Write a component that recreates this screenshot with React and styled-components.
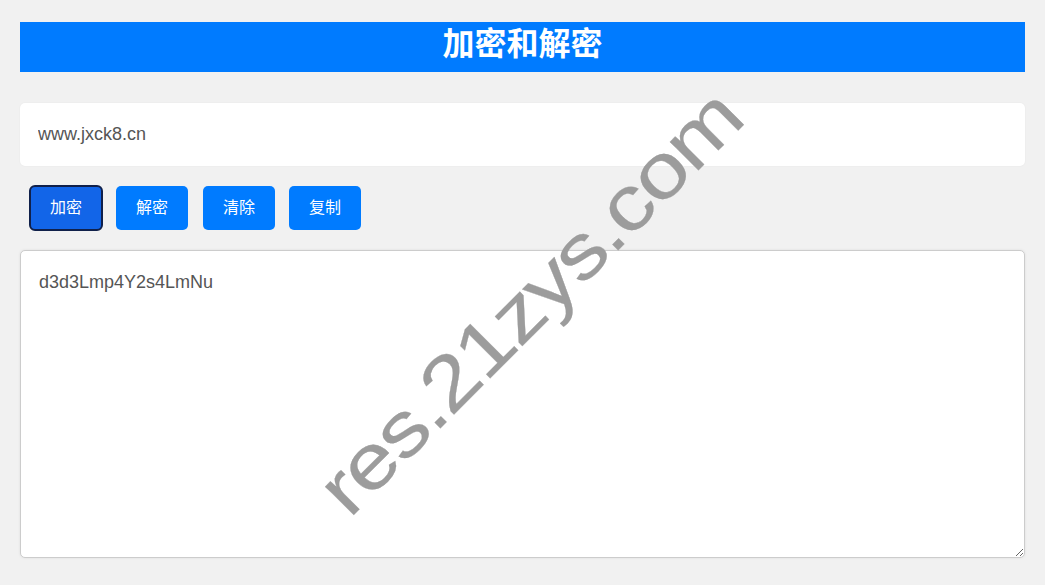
import React from "react";
import styled, { createGlobalStyle } from "styled-components";

const Global = createGlobalStyle`
  html, body { margin: 0; padding: 0; height: 100%; overflow: hidden; background: #f1f1f1; }
  * { box-sizing: border-box; }
`;
const FONT = `"Liberation Sans", Arial, "Noto Sans CJK SC", sans-serif`;

const Page = styled.div`
  position: relative;
  width: 1045px;
  height: 585px;
  padding: 22px 20px 0;
  background: #f1f1f1;
  font-family: ${FONT};
  overflow: hidden;
`;
const Title = styled.h1`
  margin: 0 0 31px;
  height: 50px;
  line-height: 45px;
  background: #007bff;
  color: #fff;
  text-align: center;
  font-size: 32px;
  font-weight: 700;
`;
const TextInput = styled.input`
  display: block;
  width: 100%;
  height: 63px;
  padding: 0 18px;
  border: 0;
  border-radius: 5px;
  background: #fff;
  box-shadow: 0 0 2px rgba(0, 0, 0, 0.06);
  color: #555;
  font: 18px ${FONT};
  outline: none;
`;
const Toolbar = styled.div`
  display: flex;
  gap: 15px;
  height: 44px;
  margin: 20px 0;
  padding-left: 10px;
`;
const Button = styled.button`
  width: 72px;
  height: 44px;
  padding: 0 0 5px;
  margin-right: ${(p) => p.$trim || 0}px;
  border: 0;
  outline: ${(p) => (p.$focused ? "2px solid #10204a" : "none")};
  outline-offset: -1px;
  border-radius: 5px;
  background: ${(p) => (p.$focused ? "#1265e8" : "#007bff")};
  color: #fff;
  font: 16px ${FONT};
`;
const Output = styled.textarea`
  display: block;
  width: 100%;
  height: 308px;
  padding: 21px 18px;
  border: 1px solid #ccc;
  border-radius: 5px;
  background: #fff;
  box-shadow: 0 0 3px rgba(0, 0, 0, 0.08);
  color: #555;
  font: 18px/21px ${FONT};
  outline: none;
  resize: vertical;
`;
const Watermark = styled.div`
  position: absolute;
  left: 529px;
  top: 302px;
  transform: translate(-50%, -50%) rotate(-45deg) scaleY(0.83);
  color: #9c9c9c;
  font: 92px/1 ${FONT};
  letter-spacing: -2.4px;
  -webkit-text-stroke: 0.3px #9c9c9c;
  white-space: nowrap;
  pointer-events: none;
`;

export default function App() {
  return (
    <Page>
      <Global />
      <Title>加密和解密</Title>
      <TextInput readOnly value="www.jxck8.cn" />
      <Toolbar>
        <Button $focused $trim={-1}>加密</Button>
        <Button>解密</Button>
        <Button $trim={-1}>清除</Button>
        <Button>复制</Button>
      </Toolbar>
      <Output readOnly value="d3d3Lmp4Y2s4LmNu" />
      <Watermark>res.21zys.com</Watermark>
    </Page>
  );
}
